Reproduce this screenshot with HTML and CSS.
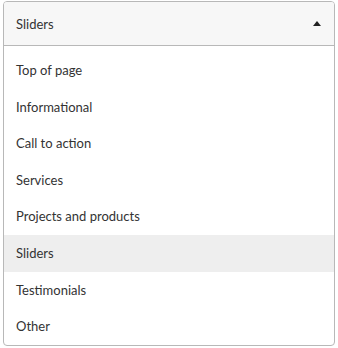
FILE: index.html
```html
<!DOCTYPE html>
<html>
<head>
    <title>Block type</title>
    <link rel="stylesheet" href="styles.css">
</head>
<body>
    <div class="select">
        <div class="select-head">
            <span>Sliders</span>
            <span class="caret"></span>
        </div>
        <ul class="options">
            <li>Top of page</li>
            <li>Informational</li>
            <li>Call to action</li>
            <li>Services</li>
            <li>Projects and products</li>
            <li class="active">Sliders</li>
            <li>Testimonials</li>
            <li>Other</li>
        </ul>
    </div>
</body>
</html>
```

FILE: styles.css
```css
body { margin: 0; font-family: Lato, "Open Sans", sans-serif; font-size: 13px; color: #333; background: #fff; }
.select { margin: 1px 0 0 3px; width: 330px; border: 1px solid #b8b8b8; border-radius: 4px; overflow: hidden; }
.select-head { height: 43px; padding: 0 13px 0 12px; display: flex; align-items: center; justify-content: space-between;
               background: #f7f7f7; border-bottom: 1px solid #b8b8b8; }
.caret { width: 0; height: 0; border-left: 4px solid transparent; border-right: 4px solid transparent;
         border-bottom: 5px solid #222; }
.options { list-style: none; margin: 0; padding: 6px 0 0; }
.options li { height: 36.6px; line-height: 37px; padding: 0 12px; }
.options li.active { background: #eee; }
```
